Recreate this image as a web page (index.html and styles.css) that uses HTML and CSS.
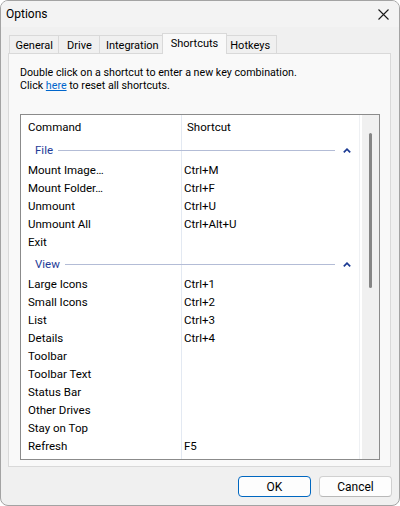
FILE: index.html
```html
<!DOCTYPE html>
<html lang="en">
<head>
  <meta charset="UTF-8" />
  <title>Options</title>
  <link rel="stylesheet" href="styles.css">
</head>
<body>

  <div class="window">
    <div class="titlebar">
      <span class="title">Options</span>
      <svg class="close" width="11" height="11" viewBox="0 0 11 11">
        <path d="M0.5 0.5L10.5 10.5M10.5 0.5L0.5 10.5" stroke="#1a1a1a" stroke-width="1.1" fill="none" />
      </svg>
    </div>

    <div class="tabs">
      <div class="tab">General</div>
      <div class="tab">Drive</div>
      <div class="tab">Integration</div>
      <div class="tab active">Shortcuts</div>
      <div class="tab">Hotkeys</div>
    </div>

    <div class="panel">
      <p class="hint">
        Double click on a shortcut to enter a new key combination.<br>
        Click <a href="#">here</a> to reset all shortcuts.
      </p>

      <div class="list">
        <div class="list-main">
          <div class="row head">
            <span class="cmd">Command</span>
            <span class="key">Shortcut</span>
          </div>

          <!-- File -->
          <div class="group">
            <span class="group-name">File</span>
            <span class="rule"></span>
            <svg class="chevron" width="8" height="5" viewBox="0 0 8 5">
              <path d="M0.8 4.4L4 1.2L7.2 4.4" stroke="#1b3a93" stroke-width="1.7" fill="none" />
            </svg>
          </div>
          <div class="row"><span class="cmd">Mount Image…</span><span class="key">Ctrl+M</span></div>
          <div class="row"><span class="cmd">Mount Folder…</span><span class="key">Ctrl+F</span></div>
          <div class="row"><span class="cmd">Unmount</span><span class="key">Ctrl+U</span></div>
          <div class="row"><span class="cmd">Unmount All</span><span class="key">Ctrl+Alt+U</span></div>
          <div class="row"><span class="cmd">Exit</span><span class="key"></span></div>

          <!-- View -->
          <div class="group">
            <span class="group-name">View</span>
            <span class="rule"></span>
            <svg class="chevron" width="8" height="5" viewBox="0 0 8 5">
              <path d="M0.8 4.4L4 1.2L7.2 4.4" stroke="#1b3a93" stroke-width="1.7" fill="none" />
            </svg>
          </div>
          <div class="row"><span class="cmd">Large Icons</span><span class="key">Ctrl+1</span></div>
          <div class="row"><span class="cmd">Small Icons</span><span class="key">Ctrl+2</span></div>
          <div class="row"><span class="cmd">List</span><span class="key">Ctrl+3</span></div>
          <div class="row"><span class="cmd">Details</span><span class="key">Ctrl+4</span></div>
          <div class="row"><span class="cmd">Toolbar</span><span class="key"></span></div>
          <div class="row"><span class="cmd">Toolbar Text</span><span class="key"></span></div>
          <div class="row"><span class="cmd">Status Bar</span><span class="key"></span></div>
          <div class="row"><span class="cmd">Other Drives</span><span class="key"></span></div>
          <div class="row"><span class="cmd">Stay on Top</span><span class="key"></span></div>
          <div class="row"><span class="cmd">Refresh</span><span class="key">F5</span></div>
        </div>

        <div class="scrollbar">
          <div class="thumb"></div>
        </div>
      </div>
    </div>

    <div class="buttons">
      <button class="btn default">OK</button>
      <button class="btn">Cancel</button>
    </div>
  </div>

</body>
</html>
```

FILE: styles.css
```css
body {
  margin: 0;
  font-family: Roboto, "Noto Sans", sans-serif;
  font-size: 11.5px;
  color: #000;
  background-color: #fff;
}

.window {
  width: 400px;
  height: 506px;
  box-sizing: border-box;
  border: 1px solid #a3a3a3;
  border-radius: 8px;
  background-color: #f0f0f0;
  overflow: hidden;
}

/* Barra de titulo */
.titlebar {
  height: 26px;
  display: flex;
  align-items: center;
  justify-content: space-between;
  padding: 0 10px 0 5px;
  background-color: #f3f3f3;
}

.title {
  font-size: 12px;
}

/* Abas */
.tabs {
  display: flex;
  align-items: flex-end;
  height: 20px;
  margin-top: 6px;
  padding-left: 8px;
  font-size: 11px;
}

.tab {
  min-width: 42px;
  height: 18px;
  box-sizing: border-box;
  line-height: 19px;
  padding: 0 5.5px;
  text-align: center;
  border: 1px solid #d9d9d9;
  border-bottom: none;
  margin-left: -1px;
  background-color: #f0f0f0;
}

.tab:first-child {
  margin-left: 0;
}

.tab.active {
  height: 21px;
  line-height: 19px;
  margin: 0 -2px -1px -3px;
  padding: 0 7.5px;
  background-color: #f9f9f9;
  position: relative;
  z-index: 1;
}

.panel {
  margin: 0 8px 0 7px;
  border: 1px solid #d9d9d9;
  background-color: #f9f9f9;
  padding: 12px 10px 6px 11px;
}

.hint {
  margin: 0 0 22px;
  font-size: 10.7px;
  line-height: 13px;
}

.hint a {
  color: #0066cc;
}

/* Lista de atalhos */
.list {
  display: flex;
  height: 346px;
  box-sizing: border-box;
  border: 1px solid #8b8b8b;
  background-color: #fff;
  overflow: hidden;
}

.list-main {
  flex: 1;
  background:
    linear-gradient(#e3e9f2, #e3e9f2) 160px 0 / 1px 100% no-repeat,
    linear-gradient(#eef0f3, #eef0f3) 338px 0 / 1px 100% no-repeat,
    #fff;
}

.row {
  display: flex;
  height: 18px;
  line-height: 18px;
}

.row .cmd {
  width: 160px;
  padding-left: 7px;
  box-sizing: border-box;
}

.row .key {
  padding-left: 3px;
}

.row.head {
  height: 22px;
  box-sizing: border-box;
  padding-top: 3px;
  line-height: 19px;
}

.row.head .key {
  padding-left: 6px;
}

.group {
  display: flex;
  align-items: center;
  height: 24px;
  box-sizing: border-box;
  padding: 2px 0 0 14px;
}

.group-name {
  color: #1f3c98;
}

.rule {
  flex: 1;
  height: 1px;
  margin-left: 5px;
  background-color: #b3bcd6;
}

.chevron {
  margin: 0 10px 0 8px;
}

.scrollbar {
  width: 17px;
  margin-left: 1px;
  background-color: #f0f0f0;
}

.thumb {
  width: 3px;
  height: 155px;
  margin: 18px 0 0 7px;
  border-radius: 2px;
  background-color: #858585;
}

/* Botoes */
.buttons {
  display: flex;
  justify-content: flex-end;
  gap: 8px;
  margin-top: 9px;
  padding-right: 7px;
}

.btn {
  width: 73px;
  height: 21px;
  font-family: inherit;
  font-size: 12px;
  color: #000;
  background-color: #fdfdfd;
  border: 1px solid #d0d0d0;
  border-bottom-color: #b8b8b8;
  border-radius: 4px;
  padding: 0;
}

.btn.default {
  border-color: #0067c0;
}
```
